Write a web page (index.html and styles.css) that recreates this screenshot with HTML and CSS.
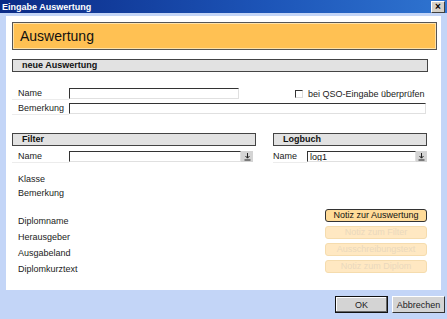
FILE: index.html
```html
<!DOCTYPE html>
<html>
  <head>
    <title>Eingabe Auswertung</title>
    <link rel="stylesheet" href="styles.css">
  </head>
  <body>
    <div class="window">
      <div class="titlebar">
        <span class="title">Eingabe Auswertung</span>
        <span class="close">&#215;</span>
      </div>

      <div class="frame">
        <div class="panel">
          <div class="banner">Auswertung</div>

          <div class="section-head wide">neue Auswertung</div>

          <div class="row first">
            <label class="label">Name</label>
            <input type="text" class="field name-field" />
            <span class="check-wrap">
              <span class="checkbox"></span>
              bei QSO-Eingabe überprüfen
            </span>
          </div>
          <div class="row">
            <label class="label">Bemerkung</label>
            <input type="text" class="field note-field" />
          </div>

          <div class="columns">
            <div class="col-filter">
              <div class="section-head">Filter</div>
              <div class="row">
                <label class="label">Name</label>
                <input type="text" class="field filter-field" />
                <span class="drop">
                  <svg width="7" height="8" viewBox="0 0 7 8">
                    <path d="M3.5 0v5M1.5 3l2 2.2 2-2.2M0.5 7h6" stroke="#222" stroke-width="1" fill="none" />
                  </svg>
                </span>
              </div>
              <div class="plain first-plain">Klasse</div>
              <div class="plain">Bemerkung</div>
            </div>

            <div class="col-log">
              <div class="section-head">Logbuch</div>
              <div class="row">
                <label class="label short">Name</label>
                <input type="text" class="field log-field" value="log1" />
                <span class="drop">
                  <svg width="7" height="8" viewBox="0 0 7 8">
                    <path d="M3.5 0v5M1.5 3l2 2.2 2-2.2M0.5 7h6" stroke="#222" stroke-width="1" fill="none" />
                  </svg>
                </span>
              </div>
            </div>
          </div>

          <div class="diplom">
            <div class="diplom-labels">
              <div>Diplomname</div>
              <div>Herausgeber</div>
              <div>Ausgabeland</div>
              <div>Diplomkurztext</div>
            </div>
            <div class="notes">
              <button class="note active">Notiz zur Auswertung</button>
              <button class="note" disabled>Notiz zum Filter</button>
              <button class="note" disabled>Ausschreibungstext</button>
              <button class="note" disabled>Notiz zum Diplom</button>
            </div>
          </div>
        </div>
      </div>

      <div class="footer">
        <button class="btn default">OK</button>
        <button class="btn">Abbrechen</button>
      </div>
    </div>
  </body>
</html>
```

FILE: styles.css
```css
body {
  margin: 0;
  font-family: "Liberation Sans", Arial, sans-serif;
  font-size: 9px;
  color: #222;
}

.window {
  width: 447px;
  height: 319px;
  background: #c3d5f7;
  display: flex;
  flex-direction: column;
  overflow: hidden;
}

.titlebar {
  height: 13px;
  background: linear-gradient(to right, #0a2a86, #1d55b8 60%, #2f74d0);
  display: flex;
  align-items: center;
  justify-content: space-between;
  padding: 0 2px 0 2px;
}

.title {
  color: #fff;
  font-weight: bold;
  font-size: 9px;
}

.close {
  width: 12px;
  height: 10px;
  background: #d4d0c8;
  border: 1px solid #fff;
  border-right-color: #404040;
  border-bottom-color: #404040;
  font-size: 10px;
  line-height: 9px;
  text-align: center;
  font-weight: bold;
  color: #000;
}

.frame {
  padding: 3px 6px 0 6px;
}

.panel {
  background: #fff;
  height: 268px;
  padding: 6px 4px 0 6px;
}

.banner {
  height: 26px;
  background: #ffc153;
  border: 1px solid #555;
  box-shadow: inset 0 0 0 1px #ffe2a8;
  font-size: 14px;
  line-height: 27px;
  padding-left: 7px;
  color: #111;
}

.section-head {
  height: 11px;
  background: #e2e2e2;
  border: 1px solid #444;
  font-weight: bold;
  font-size: 9px;
  line-height: 11px;
  padding-left: 9px;
  color: #111;
}

.section-head.wide {
  width: 405px;
  margin-top: 9px;
}

.row {
  display: flex;
  align-items: center;
  height: 11px;
  margin-top: 4px;
}

.row.first {
  margin-top: 16px;
}

.label {
  width: 51px;
  padding-left: 6px;
  height: 11px;
  line-height: 11px;
  border-bottom: 1px solid #ececec;
  flex-shrink: 0;
}

.label.short {
  width: 34px;
  padding-left: 0;
}

.field {
  height: 11px;
  box-sizing: border-box;
  border: 1px solid #e0e0e0;
  border-top-color: #333;
  border-left-color: #333;
  padding: 0 2px;
  font-family: inherit;
  font-size: 9px;
  margin: 0;
  background: #fff;
  color: #111;
}

.name-field {
  width: 170px;
}

.note-field {
  width: 357px;
}

.check-wrap {
  margin-left: 56px;
  display: flex;
  align-items: center;
  gap: 5px;
}

.checkbox {
  width: 6px;
  height: 6px;
  border: 1px solid #ddd;
  border-top-color: #333;
  border-left-color: #333;
}

.columns {
  display: flex;
  gap: 17px;
  margin-top: 19px;
}

.col-filter {
  width: 244px;
}

.col-log {
  width: 154px;
}

.col-filter .section-head,
.col-log .section-head {
  margin-bottom: 5px;
}

.filter-field {
  width: 172px;
}

.log-field {
  width: 109px;
}

.drop {
  width: 12px;
  height: 11px;
  background: #d4d4d4;
  display: flex;
  align-items: center;
  justify-content: center;
}

.plain {
  padding-left: 6px;
  height: 14px;
  line-height: 14px;
}

.first-plain {
  margin-top: 10px;
}

.diplom {
  display: flex;
  justify-content: space-between;
  margin-top: 2px;
}

.diplom-labels {
  padding-left: 6px;
  padding-top: 13px;
  display: flex;
  flex-direction: column;
  gap: 3px;
}

.diplom-labels div {
  height: 13px;
  line-height: 13px;
}

.notes {
  display: flex;
  flex-direction: column;
  gap: 4px;
  margin-right: 10px;
  padding-top: 7px;
}

.note {
  width: 102px;
  height: 13px;
  border-radius: 3px;
  border: 1px solid #f5dcae;
  background: #ffe8c2;
  color: #ead8bd;
  font-family: inherit;
  font-size: 9px;
  padding: 0;
  line-height: 11px;
}

.note.active {
  border-color: #333;
  background: #ffdb98;
  color: #111;
}

.footer {
  display: flex;
  justify-content: flex-end;
  gap: 4px;
  padding: 6px 2px 0 0;
}

.btn {
  width: 53px;
  height: 17px;
  background: #d4d4d4;
  border: 1px solid #fff;
  border-right-color: #333;
  border-bottom-color: #333;
  font-family: inherit;
  font-size: 9px;
  color: #222;
  padding: 0;
}

.btn.default {
  border: 1px solid #111;
  box-shadow: inset -1px -1px 0 #666, inset 1px 1px 0 #fff;
}
```
